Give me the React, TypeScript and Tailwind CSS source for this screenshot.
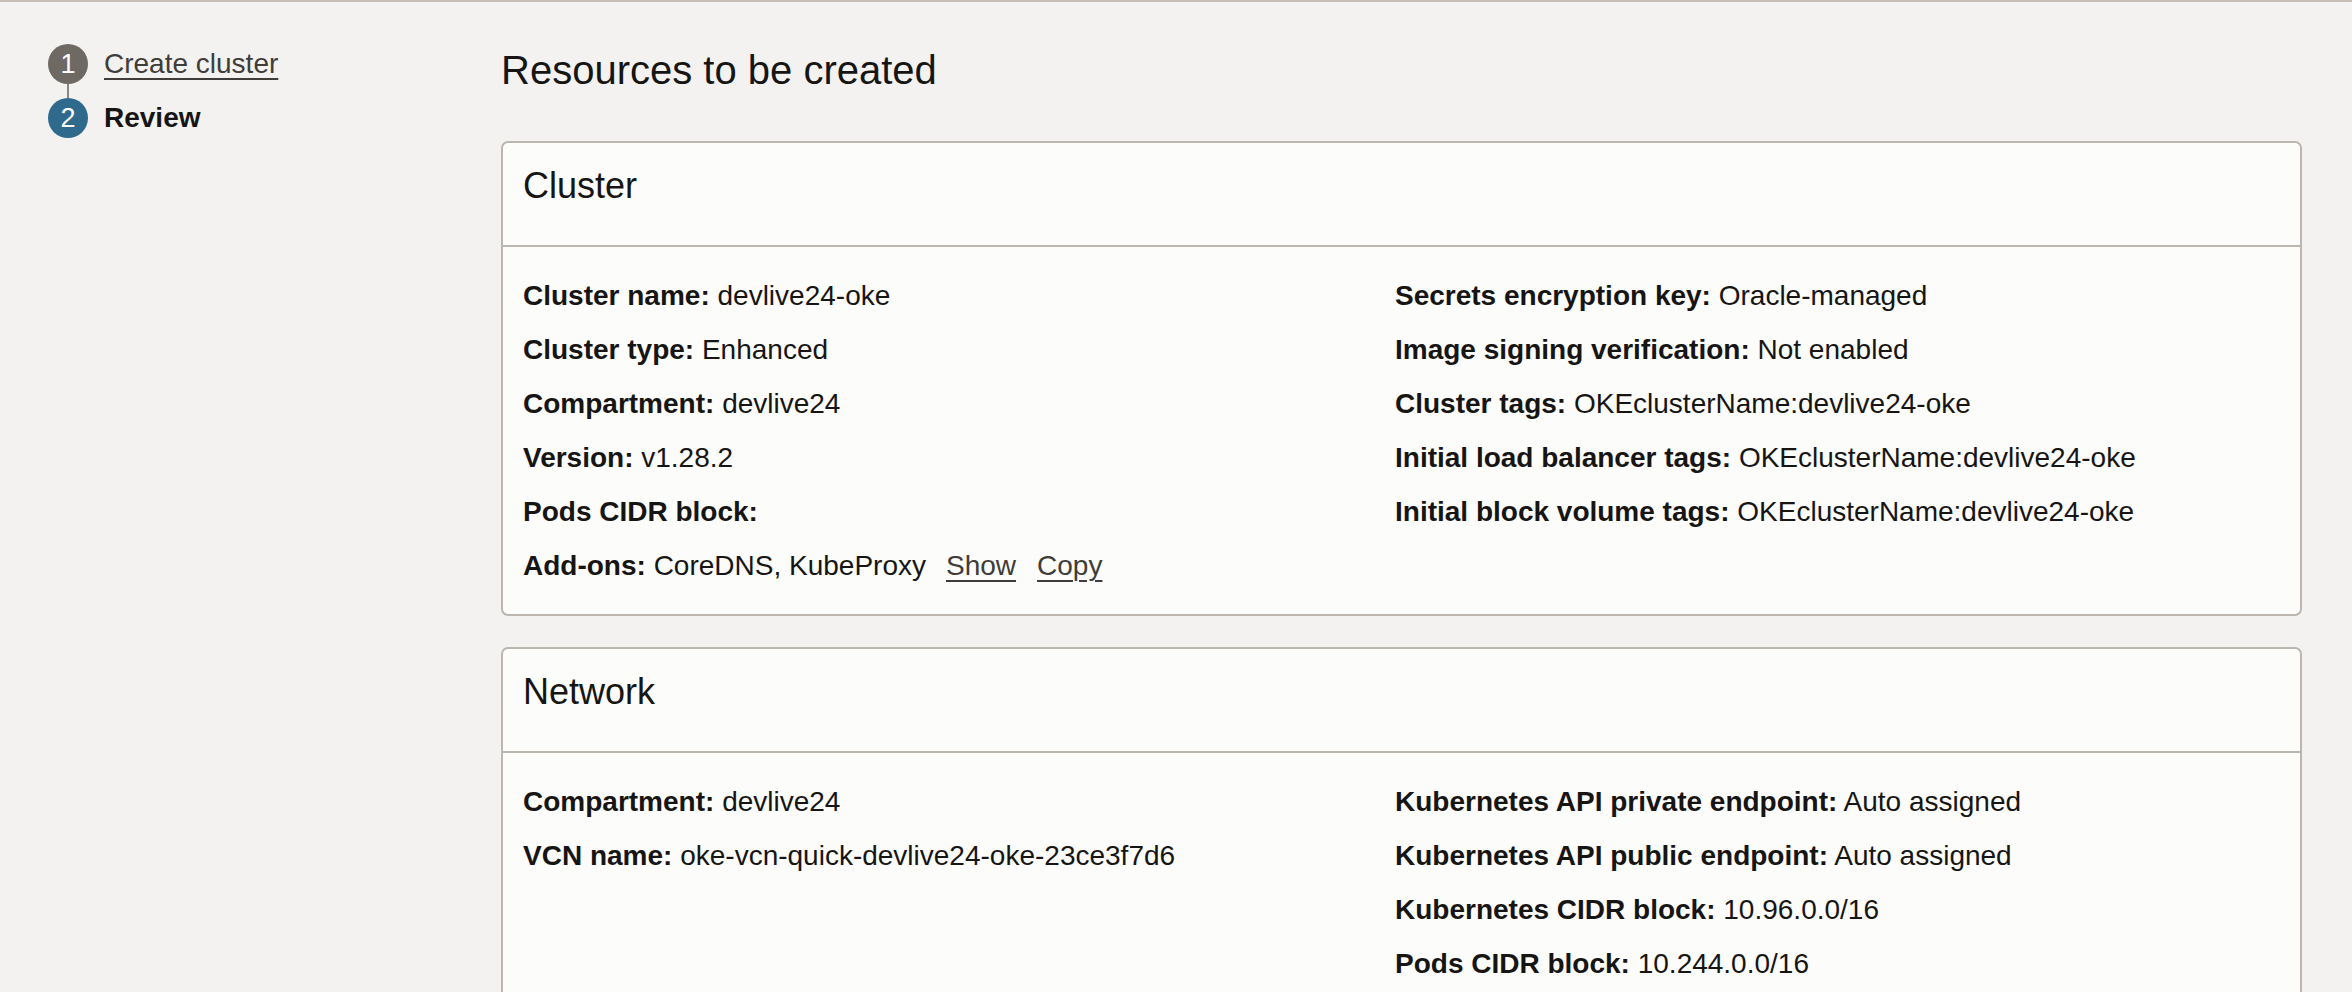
// Create cluster wizard - Review step
const font = { fontFamily: '"Liberation Sans", Arial, sans-serif' };

type Item = { label: string; value?: string };

function Row({ label, value, children }: { label: string; value?: string; children?: React.ReactNode }) {
  return (
    <div className="h-[54px] leading-[54px] text-[28px] text-[#161513] whitespace-nowrap">
      <span className="font-bold">{label}</span>
      {value ? <span> {value}</span> : null}
      {children}
    </div>
  );
}

function Card({ title, left, right, extra }: { title: string; left: Item[]; right: Item[]; extra?: React.ReactNode }) {
  return (
    <section className="bg-[#fcfcfb] border-2 border-[#bbb6b0] rounded-[7px]">
      <div className="h-[104px] px-[20px] pt-[21px] border-b-2 border-[#bbb6b0]">
        <h2 className="text-[36px] leading-[44px] text-[#161513]">{title}</h2>
      </div>
      <div className="grid grid-cols-[872px_1fr] px-[20px] pt-[22px] pb-[21px]">
        <div>
          {left.map((it) => (
            <Row key={it.label} label={it.label} value={it.value} />
          ))}
          {extra}
        </div>
        <div>
          {right.map((it) => (
            <Row key={it.label} label={it.label} value={it.value} />
          ))}
        </div>
      </div>
    </section>
  );
}

export default function App() {
  return (
    <main className="min-h-screen bg-[#f3f2f1] border-t-2 border-[#c5beb7]" style={font}>
      <div className="flex">
        {/* Steps */}
        <aside className="w-[501px] shrink-0 pl-[48px] pt-[42px]">
          <div className="flex items-center h-[40px]">
            <div className="w-[40px] h-[40px] rounded-full bg-[#6f6964] text-white text-[27px] flex items-center justify-center">1</div>
            <a href="#" className="ml-[16px] text-[28px] leading-[40px] text-[#3f3c39] underline underline-offset-[5px] decoration-2">
              Create cluster
            </a>
          </div>
          <div className="w-[40px] flex justify-center">
            <div className="w-[2px] h-[14px] bg-[#8b8681]" />
          </div>
          <div className="flex items-center h-[40px]">
            <div className="w-[40px] h-[40px] rounded-full bg-[#2f6a8c] text-white text-[27px] flex items-center justify-center">2</div>
            <span className="ml-[16px] text-[28px] leading-[40px] font-bold text-[#161513]">Review</span>
          </div>
        </aside>

        {/* Main content */}
        <div className="w-[1801px] shrink-0">
          <h1 className="mt-[44px] text-[40px] leading-[48px] text-[#161513]">Resources to be created</h1>

          <div className="mt-[47px] flex flex-col gap-[31px]">
            <Card
              title="Cluster"
              left={[
                { label: 'Cluster name:', value: 'devlive24-oke' },
                { label: 'Cluster type:', value: 'Enhanced' },
                { label: 'Compartment:', value: 'devlive24' },
                { label: 'Version:', value: 'v1.28.2' },
                { label: 'Pods CIDR block:' },
              ]}
              extra={
                <Row label="Add-ons:" value="CoreDNS, KubeProxy">
                  <a href="#" className="ml-[20px] text-[#3f3c39] underline underline-offset-[5px] decoration-2">Show</a>
                  <a href="#" className="ml-[21px] text-[#3f3c39] underline underline-offset-[5px] decoration-2">Copy</a>
                </Row>
              }
              right={[
                { label: 'Secrets encryption key:', value: 'Oracle-managed' },
                { label: 'Image signing verification:', value: 'Not enabled' },
                { label: 'Cluster tags:', value: 'OKEclusterName:devlive24-oke' },
                { label: 'Initial load balancer tags:', value: 'OKEclusterName:devlive24-oke' },
                { label: 'Initial block volume tags:', value: 'OKEclusterName:devlive24-oke' },
              ]}
            />
            <Card
              title="Network"
              left={[
                { label: 'Compartment:', value: 'devlive24' },
                { label: 'VCN name:', value: 'oke-vcn-quick-devlive24-oke-23ce3f7d6' },
              ]}
              right={[
                { label: 'Kubernetes API private endpoint:', value: 'Auto assigned' },
                { label: 'Kubernetes API public endpoint:', value: 'Auto assigned' },
                { label: 'Kubernetes CIDR block:', value: '10.96.0.0/16' },
                { label: 'Pods CIDR block:', value: '10.244.0.0/16' },
              ]}
            />
          </div>
        </div>
      </div>
    </main>
  );
}
